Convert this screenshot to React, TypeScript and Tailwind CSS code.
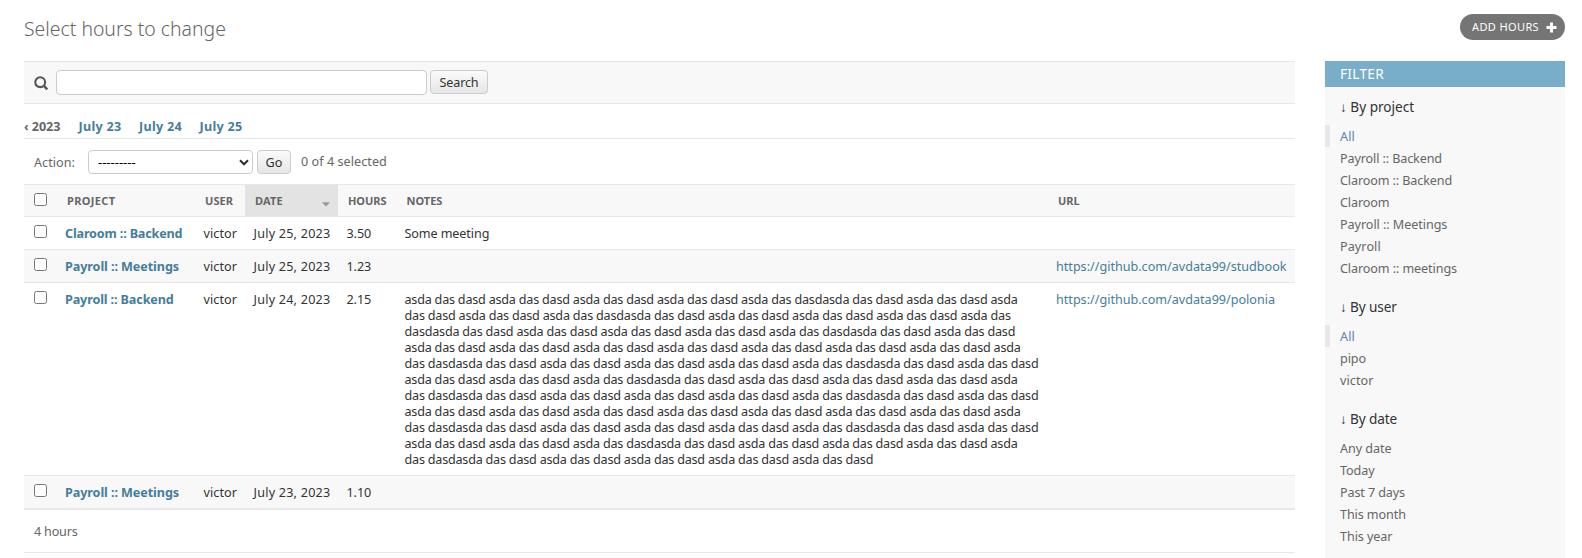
import React from "react";

type Item = { text: string; tracking: string };

const DAYS = ["July 23", "July 24", "July 25"];

const TRIPLES = "asda das dasd asda das dasd asda das dasd asda das dasd asda das dasd asda das dasd asda das dasd asda";
const LONG = "das dasdasda das dasd asda das dasd asda das dasd asda das dasd asda das dasdasda das dasd asda das dasd";
const MIXED = "asda das dasd asda das dasd asda das dasdasda das dasd asda das dasd asda das dasd asda das dasd asda";

const LONG_NOTE = [
  "asda das dasd asda das dasd asda das dasd asda das dasd asda das dasdasda das dasd asda das dasd asda",
  "das dasd asda das dasd asda das dasdasda das dasd asda das dasd asda das dasd asda das dasd asda das",
  "dasdasda das dasd asda das dasd asda das dasd asda das dasd asda das dasdasda das dasd asda das dasd",
  TRIPLES,
  LONG,
  MIXED,
  LONG,
  TRIPLES,
  LONG,
  MIXED,
  "das dasdasda das dasd asda das dasd asda das dasd asda das dasd asda das dasd",
];

const ROWS = [
  { project: "Claroom :: Backend", tracking: "tracking-[-0.16px]", date: "July 25, 2023", hours: "3.50", notes: ["Some meeting"], url: "", height: "h-[33px]" },
  { project: "Payroll :: Meetings", tracking: "tracking-[-0.08px]", date: "July 25, 2023", hours: "1.23", notes: [], url: "https://github.com/avdata99/studbook", height: "h-[33px]" },
  { project: "Payroll :: Backend", tracking: "tracking-[-0.12px]", date: "July 24, 2023", hours: "2.15", notes: LONG_NOTE, url: "https://github.com/avdata99/polonia", height: "h-[193px]" },
  { project: "Payroll :: Meetings", tracking: "tracking-[-0.08px]", date: "July 23, 2023", hours: "1.10", notes: [], url: "", height: "h-[33px]" },
];

const FILTERS: { title: Item; selected: boolean; items: Item[] }[] = [
  {
    title: { text: "By project", tracking: "tracking-normal" },
    selected: true,
    items: [
      { text: "All", tracking: "tracking-[0.15px]" },
      { text: "Payroll :: Backend", tracking: "tracking-[-0.12px]" },
      { text: "Claroom :: Backend", tracking: "tracking-[-0.12px]" },
      { text: "Claroom", tracking: "tracking-[-0.12px]" },
      { text: "Payroll :: Meetings", tracking: "tracking-[-0.06px]" },
      { text: "Payroll", tracking: "tracking-[0.08px]" },
      { text: "Claroom :: meetings", tracking: "tracking-[-0.1px]" },
    ],
  },
  {
    title: { text: "By user", tracking: "tracking-[-0.12px]" },
    selected: true,
    items: [
      { text: "All", tracking: "tracking-[0.15px]" },
      { text: "pipo", tracking: "tracking-[-0.1px]" },
      { text: "victor", tracking: "tracking-[0.08px]" },
    ],
  },
  {
    title: { text: "By date", tracking: "tracking-[-0.12px]" },
    selected: false,
    items: [
      { text: "Any date", tracking: "tracking-[-0.06px]" },
      { text: "Today", tracking: "tracking-[-0.06px]" },
      { text: "Past 7 days", tracking: "tracking-[-0.12px]" },
      { text: "This month", tracking: "tracking-[-0.1px]" },
      { text: "This year", tracking: "tracking-[-0.08px]" },
    ],
  },
];

function Checkbox() {
  return <span className="block size-[13px] rounded-[2.5px] border border-[#767676] bg-white" />;
}

function Button({ children, className }: { children: React.ReactNode; className: string }) {
  return (
    <button
      className={`flex items-center justify-center rounded-[4px] border border-[#ccc] bg-linear-to-b from-[#fbfbfb] to-[#e6e6e6] pt-px leading-6 text-[#333] ${className}`}
    >
      {children}
    </button>
  );
}

function Toolbar() {
  return (
    <div className="flex h-[43px] items-start border-y border-[#e8e8e8] bg-[#f8f8f8] pt-2 pl-[10px]">
      <svg className="mt-[5.5px] size-[15px]" viewBox="0 0 15 15" fill="none" stroke="#555">
        <circle cx="6.2" cy="6.2" r="4.9" strokeWidth="2.1" />
        <path d="M9.8 9.8 L13.3 13.3" strokeWidth="2.5" />
      </svg>
      <input className="ml-[7px] h-[25px] w-[371px] rounded-[4px] border border-[#ccc] bg-white px-1.5" />
      <Button className="ml-[3px] h-6 w-[58px] tracking-[-0.18px]">Search</Button>
    </div>
  );
}

function DateHierarchy() {
  return (
    <div className="flex h-[35px] border-b border-[#e8e8e8] pt-[14px] leading-[17px] font-bold">
      <span className="w-[54.5px] tracking-[-0.05px] text-[#666]">‹ 2023</span>
      {DAYS.map((day) => (
        <span key={day} className="w-[60.5px] tracking-[0.28px] text-[#447e9b]">
          {day}
        </span>
      ))}
    </div>
  );
}

function Actions() {
  return (
    <div className="flex h-[45px] items-start pt-[11px] pl-[10px] leading-6 text-[#666]">
      <span className="w-[54px] pt-px tracking-[0.05px]">Action:</span>
      <div className="flex h-6 w-[165px] items-center justify-between rounded-[4px] border border-[#ccc] bg-white pr-[3px] pl-[9px] text-black">
        <span className="text-[13px] leading-none">---------</span>
        <svg className="h-[7px] w-[10px]" viewBox="0 0 10 7" fill="none" stroke="#333" strokeWidth="2.2">
          <path d="M1 1.3 L5 5.2 L9 1.3" />
        </svg>
      </div>
      <Button className="ml-1 h-6 w-[34px]">Go</Button>
      <span className="ml-[10px] tracking-[0.05px]">0 of 4 selected</span>
    </div>
  );
}

function HeadCell({ children, className = "" }: { children?: React.ReactNode; className?: string }) {
  return (
    <th className={`h-[33px] border-y border-[#e8e8e8] p-0 pl-[10px] text-left align-middle text-[11px] leading-4 font-bold text-[#666] ${className}`}>
      {children}
    </th>
  );
}

function HoursTable() {
  const cell = "border-b border-[#e8e8e8] p-0 pt-[9px] pl-2 align-top";
  return (
    <table className="w-[1271px] table-fixed border-separate border-spacing-0 leading-4">
      <colgroup>
        <col className="w-[33px]" />
        <col className="w-[138px]" />
        <col className="w-[50px]" />
        <col className="w-[93px]" />
        <col className="w-[59px]" />
        <col className="w-[651px]" />
        <col className="w-[247px]" />
      </colgroup>
      <thead className="bg-[#f8f8f8]">
        <tr>
          <HeadCell className="pb-[3px]">
            <Checkbox />
          </HeadCell>
          <HeadCell className="tracking-[0.36px]">PROJECT</HeadCell>
          <HeadCell className="tracking-[0.06px]">USER</HeadCell>
          <HeadCell className="bg-[#e3e3e3]">
            <span className="flex items-center justify-between pr-2 tracking-[0.13px]">
              DATE
              <svg className="mt-[7px] h-[5px] w-2" viewBox="0 0 8 5" fill="#999">
                <path d="M0 0.3 H8 L4 4.6 Z" />
              </svg>
            </span>
          </HeadCell>
          <HeadCell className="tracking-[-0.05px]">HOURS</HeadCell>
          <HeadCell>
            <span className="-ml-[0.5px]">NOTES</span>
          </HeadCell>
          <HeadCell>URL</HeadCell>
        </tr>
      </thead>
      <tbody>
        {ROWS.map((row, i) => (
          <tr key={i} className={`text-[#333] ${row.height} ${i % 2 ? "bg-[#f8f8f8]" : "bg-white"}`}>
            <td className="border-b border-[#e8e8e8] p-0 pt-2 pl-[10px] align-top">
              <Checkbox />
            </td>
            <td className={`${cell} font-bold text-[#447e9b] ${row.tracking}`}>{row.project}</td>
            <td className={`${cell} tracking-[0.08px]`}>
              <span className="ml-[0.5px]">victor</span>
            </td>
            <td className={`${cell} tracking-[0.22px]`}>
              <span className="ml-[0.5px]">{row.date}</span>
            </td>
            <td className={`${cell} tracking-[-0.08px]`}>
              <span className="ml-[0.5px]">{row.hours}</span>
            </td>
            <td className={`${cell} whitespace-nowrap ${row.notes.length > 1 ? "tracking-[-0.215px]" : "tracking-[-0.1px]"}`}>
              {row.notes.map((line, n) => (
                <div key={n} className="-ml-[0.5px]">
                  {line}
                </div>
              ))}
            </td>
            <td className={`${cell} text-[#447e9b]`}>{row.url}</td>
          </tr>
        ))}
      </tbody>
    </table>
  );
}

function FilterPanel() {
  return (
    <aside className="w-60 bg-[#f8f8f8]">
      <h2 className="h-[26px] bg-[#79aec8] pl-[15px] text-[13.6px] leading-[26px] tracking-[0.3px] text-white">FILTER</h2>
      <div className="-mt-2">
        {FILTERS.map(({ title, selected, items }) => (
          <section key={title.text} className="pt-[10px]">
            <h3 className={`h-9 pl-[15px] text-[13.6px] leading-9 text-[#333] ${title.tracking}`}>↓ {title.text}</h3>
            <ul>
              {items.map((item, i) => (
                <li
                  key={item.text}
                  className={`h-[22px] leading-6 ${item.tracking} ${
                    selected && i === 0 ? "border-l-[5px] border-[#e8e8e8] pl-[10px] text-[#5b80b2]" : "pl-[15px] text-[#666]"
                  }`}
                >
                  {item.text}
                </li>
              ))}
            </ul>
          </section>
        ))}
      </div>
    </aside>
  );
}

export default function App() {
  return (
    <div className="flex h-[558px] w-[1582px] flex-col overflow-hidden bg-white pr-[17px] pl-6 font-['Noto_Sans',sans-serif] text-[12.6px]">
      <header className="flex h-[61px] shrink-0 items-start justify-between">
        <h1 className="pt-4 text-[19.4px] leading-[26px] font-light text-[#666]">Select hours to change</h1>
        <a className="mt-[14px] flex h-[26px] w-[105px] items-center rounded-full bg-[#757575] pl-3 text-[11px] tracking-[0.38px] whitespace-nowrap text-white">
          ADD HOURS
          <svg className="ml-[7px] size-[11px]" viewBox="0 0 11 11" stroke="#fff" strokeWidth="3">
            <path d="M5.5 0.5 V10.5 M0.5 5.5 H10.5" />
          </svg>
        </a>
      </header>
      <div className="flex grow justify-between">
        <main className="w-[1271px]">
          <Toolbar />
          <DateHierarchy />
          <Actions />
          <HoursTable />
          <p className="h-11 border-y border-[#e8e8e8] pl-[10px] leading-[44px] tracking-[-0.2px] text-[#666]">4 hours</p>
        </main>
        <FilterPanel />
      </div>
    </div>
  );
}
